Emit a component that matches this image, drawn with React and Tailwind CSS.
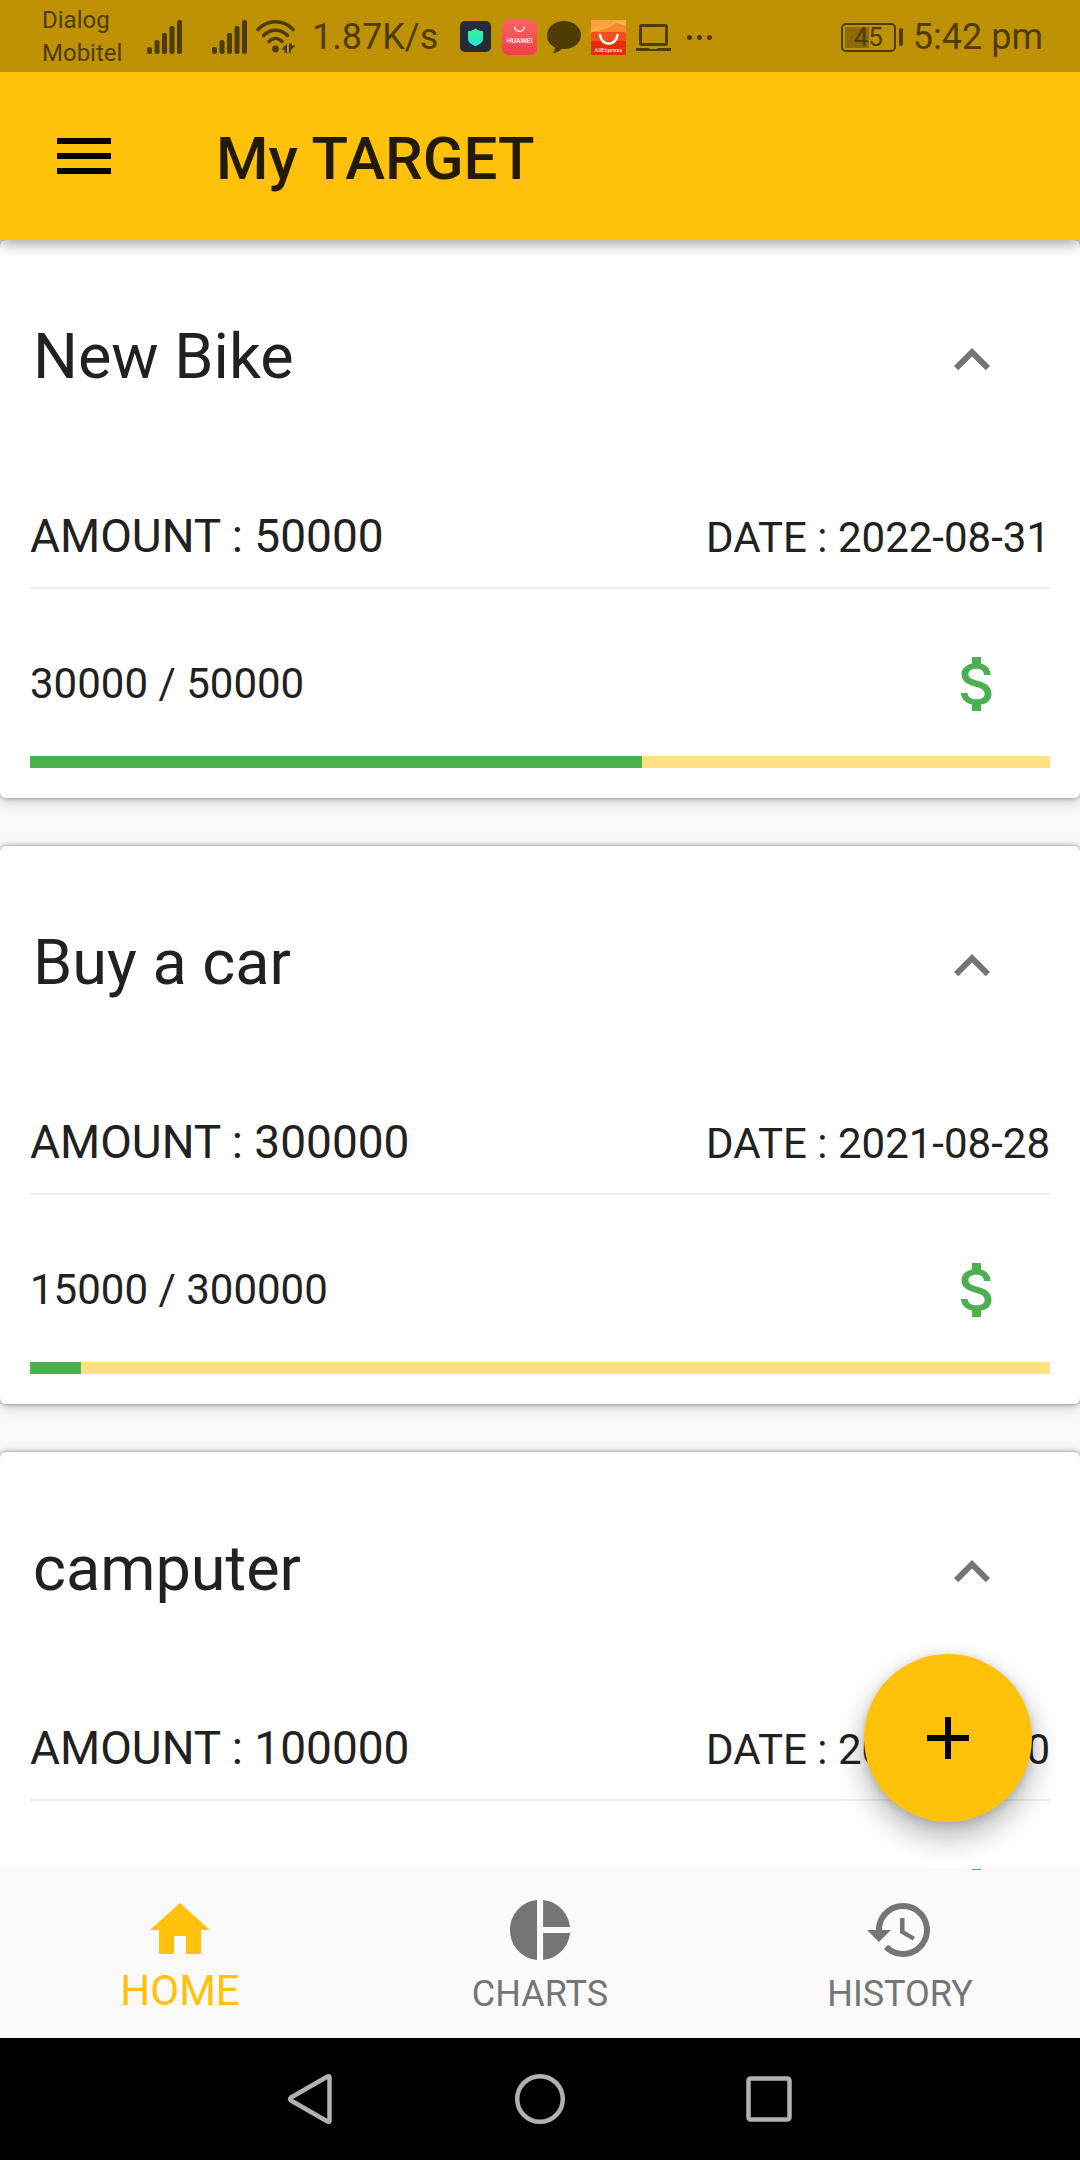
import React from "react";

const goals = [
  { title: "New Bike", saved: 30000, amount: 50000, date: "2022-08-31" },
  { title: "Buy a car", saved: 15000, amount: 300000, date: "2021-08-28" },
  { title: "camputer", saved: 20000, amount: 100000, date: "2021-10-30" },
];

function MaterialIcon({ d, className = "" }) {
  return (
    <svg viewBox="0 0 24 24" aria-hidden="true" className={`size-[72px] shrink-0 fill-current ${className}`}>
      <path d={d} />
    </svg>
  );
}

const icons = {
  menu: "M3 18h18v-2H3v2zm0-5h18v-2H3v2zm0-7v2h18V6H3z",
  expandLess: "M12 8l-6 6 1.41 1.41L12 10.83l4.59 4.58L18 14z",
  money:
    "M11.8 10.9c-2.27-.59-3-1.2-3-2.15 0-1.09 1.01-1.85 2.7-1.85 1.78 0 2.44.85 2.5 2.1h2.21c-.07-1.72-1.12-3.3-3.21-3.81V3h-3v2.16c-1.94.42-3.5 1.68-3.5 3.61 0 2.31 1.91 3.46 4.7 4.13 2.5.6 3 1.48 3 2.41 0 .69-.49 1.79-2.7 1.79-2.06 0-2.87-.92-2.98-2.1h-2.2c.12 2.19 1.76 3.42 3.68 3.83V21h3v-2.15c1.95-.37 3.5-1.5 3.5-3.55 0-2.84-2.43-3.81-4.7-4.4z",
  add: "M19 13h-6v6h-2v-6H5v-2h6V5h2v6h6v2z",
  home: "M10 20v-6h4v6h5v-8h3L12 3 2 12h3v8z",
  pie: "M11 2v20c-5.07-.5-9-4.79-9-10s3.93-9.5 9-10zm2.03 0v8.99H22c-.47-4.74-4.24-8.52-8.97-8.99zm0 11.01V22c4.74-.47 8.5-4.25 8.97-8.99h-8.97z",
  history:
    "M13 3c-4.97 0-9 4.03-9 9H1l3.89 3.89.07.14L9 12H6c0-3.87 3.13-7 7-7s7 3.13 7 7-3.13 7-7 7c-1.93 0-3.68-.79-4.94-2.06l-1.42 1.42C8.27 19.99 10.51 21 13 21c4.97 0 9-4.03 9-9s-4.03-9-9-9zm-1 5v5l4.28 2.54.72-1.21-3.5-2.08V8H12z",
};

function Signal({ className = "" }) {
  return (
    <svg viewBox="0 0 36 34" aria-hidden="true" className={`h-[34px] w-9 fill-current ${className}`}>
      <rect x="0" y="27" width="5" height="7" rx="2" />
      <rect x="7.5" y="20" width="5" height="14" rx="2" />
      <rect x="15" y="13" width="5" height="21" rx="2" />
      <rect x="22.5" y="6" width="5" height="28" rx="2" />
      <rect x="30" y="0" width="5" height="34" rx="2" />
    </svg>
  );
}

function Wifi() {
  return (
    <svg viewBox="0 0 40 34" aria-hidden="true" className="ml-2 h-[34px] w-10">
      <g fill="none" stroke="currentColor" strokeWidth="3.4" strokeLinecap="round">
        <path d="M2 9.5C12-.8 27-.8 37 9.5" />
        <path d="M7.5 15.5c7-7 17-7 24 0" />
        <path d="M13 21.5c4-4 9-4 13 0" />
      </g>
      <g fill="currentColor">
        <circle cx="19.5" cy="29" r="3.4" />
        <path d="M25 29.500l6-6V33h-2.500v-3.500zM33 23.500v9.500h2v-3l4.500-4.500h-3.500v-2z" />
      </g>
    </svg>
  );
}

function Shield() {
  return (
    <svg viewBox="0 0 32 32" aria-hidden="true" className="size-8">
      <defs>
        <linearGradient id="shield" x1="0" y1="0" x2="0" y2="1">
          <stop offset="0" stopColor="#35f58c" />
          <stop offset="1" stopColor="#27e2dc" />
        </linearGradient>
      </defs>
      <rect width="31" height="31" rx="5" fill="#252d3a" />
      <path d="M15.5 7.5c2.5 2 5 2.5 7.5 2.7v8c0 3-3.5 5-7.5 7-4-2-7.5-4-7.5-7v-8c2.5-.2 5-.7 7.5-2.7z" fill="url(#shield)" />
    </svg>
  );
}

function HuaweiStore() {
  return (
    <svg viewBox="0 0 35 35" aria-hidden="true" className="size-[35px]">
      <defs>
        <linearGradient id="huawei" x1="0" y1="0" x2="0" y2="1">
          <stop offset="0" stopColor="#fb6560" />
          <stop offset="1" stopColor="#ef3f4c" />
        </linearGradient>
      </defs>
      <rect width="35" height="35" rx="6" fill="url(#huawei)" />
      <path d="M12.5 6.5c1 6.5 9 6.5 10 0" fill="none" stroke="#fff" strokeWidth="1.3" />
      <text x="17.5" y="22.800" fontSize="7" fontWeight="500" textAnchor="middle" fill="#fff">HUAWEI</text>
    </svg>
  );
}

function Chat() {
  return (
    <svg viewBox="0 0 34 33" aria-hidden="true" className="h-[33px] w-[34px] fill-current">
      <path d="M17 0c9.4 0 17 6 17 14.2S26.4 28 17 28h-2.500C12 30.500 9 32 5.500 32c1.700-1.700 2.500-3.500 2.500-5.700C3 24 0 19.500 0 14.200 0 6 7.600 0 17 0z" />
    </svg>
  );
}

function AliExpress() {
  return (
    <svg viewBox="0 0 35 35" aria-hidden="true" className="size-[35px]">
      <rect width="35" height="35" fill="#f9a13a" />
      <path d="M0 10l8-4 6 2 8-6 13-2v14H0z" fill="#fbb04a" />
      <path d="M0 12l10-2 9-3 6-4 10 3v8H0z" fill="#f5892c" />
      <path d="M0 15q0-3 3-3h29q3 0 3 3v20H0z" fill="#e62e04" />
      <path d="M0 15q0-3 3-3h29q3 0 3 3v6H0z" fill="#f4501c" />
      <path d="M9 15c1.5 11.5 16 11.5 17.5 0" fill="none" stroke="#fff" strokeWidth="2.6" strokeLinecap="round" />
      <text x="17.5" y="31.5" fontSize="6" textAnchor="middle" fill="#fff">AliExpress</text>
    </svg>
  );
}

function Laptop() {
  return (
    <svg viewBox="0 0 35 27" aria-hidden="true" className="h-[27px] w-[35px]">
      <rect x="4.5" y="1.5" width="26" height="19" rx="1.5" fill="none" stroke="currentColor" strokeWidth="3" />
      <path d="M0 24h13l1 1h7l1-1h13v3H0z" fill="currentColor" />
    </svg>
  );
}

function Battery() {
  return (
    <div className="flex items-center gap-[3px]">
      <div className="relative flex h-[29px] w-[55px] items-center justify-center rounded-[5px] border-2 border-current">
        <div className="absolute top-[2px] bottom-[2px] left-[2px] w-[24px] bg-[#8d6b04]" />
        <span className="relative text-[26px] leading-none">45</span>
      </div>
      <div className="h-[18px] w-1 rounded-sm bg-current" />
    </div>
  );
}

function StatusBar() {
  return (
    <div className="z-20 flex h-[72px] shrink-0 items-center bg-[#bf9206] pt-0.5 pr-[37px] pl-[42px] text-[#4f3c02]">
      <div className="w-[105px] text-[24px] leading-[33px]">
        <div>Dialog</div>
        <div>Mobitel</div>
      </div>
      <Signal />
      <Signal className="ml-[29px]" />
      <Wifi />
      <span className="ml-4 text-[36px] leading-none whitespace-nowrap">1.87K/s</span>
      <div className="ml-[22px] flex items-center gap-2.5">
        <Shield />
        <HuaweiStore />
        <Chat />
        <AliExpress />
        <Laptop />
      </div>
      <div className="ml-[16px] flex gap-[5px]">
        <i className="size-[5px] rounded-full bg-current" />
        <i className="size-[5px] rounded-full bg-current" />
        <i className="size-[5px] rounded-full bg-current" />
      </div>
      <div className="ml-auto flex items-center gap-[10px]">
        <Battery />
        <span className="text-[36px] leading-none whitespace-nowrap">5:42 pm</span>
      </div>
    </div>
  );
}

function GoalCard({ title, saved, amount, date }) {
  return (
    <article className="shrink-0 rounded-[6px] bg-white px-[30px] pb-[30px] shadow-[0_0_5px_rgba(0,0,0,0.45),0_4px_16px_rgba(0,0,0,0.16)]">
      <div className="flex h-60 items-center justify-between pr-[42px] pl-[3px]">
        <h2 className="pb-1.5 text-[63px] leading-[74px]">{title}</h2>
        <button type="button" aria-label={`Collapse ${title}`} className="text-[#757575]">
          <MaterialIcon d={icons.expandLess} />
        </button>
      </div>
      <div className="flex h-[109px] items-baseline justify-between border-b-2 border-[#eeeeee] pt-7 leading-[56px]">
        <p className="text-[46px]">AMOUNT : {amount}</p>
        <p className="text-[42px]">DATE : {date}</p>
      </div>
      <div className="flex items-center justify-between pt-[59px] pr-9 pb-9">
        <p className="text-[42px] leading-[50px]">
          {saved} / {amount}
        </p>
        <button type="button" aria-label={`Add money to ${title}`} className="text-[#4caf50]">
          <MaterialIcon d={icons.money} />
        </button>
      </div>
      <div
        role="progressbar"
        aria-label={`${title} progress`}
        aria-valuenow={saved}
        aria-valuemax={amount}
        className="h-3 bg-[#ffe083]"
      >
        <div className="h-full bg-[#4caf50]" style={{ width: `${(saved / amount) * 100}%` }} />
      </div>
    </article>
  );
}

function NavItem({ icon, label, active }) {
  return (
    <a
      href={`#${label.toLowerCase()}`}
      aria-current={active ? "page" : undefined}
      className={`flex flex-1 flex-col items-center pt-6 ${active ? "text-[42px] leading-[50px] text-[#ffc109]" : "text-[36px] leading-[56px] text-[#757575]"}`}
    >
      <MaterialIcon d={icon} />
      <span>{label}</span>
    </a>
  );
}

export default function App() {
  return (
    <div className="flex h-screen flex-col overflow-hidden bg-[#fafafa] font-[Roboto,sans-serif] text-[#212121]">
      <StatusBar />
      <header className="z-10 flex h-[168px] shrink-0 items-center gap-24 bg-[#ffc109] px-12 shadow-[0_3px_14px_rgba(0,0,0,0.4)]">
        <button type="button" aria-label="Open menu" className="text-black">
          <MaterialIcon d={icons.menu} />
        </button>
        <h1 className="pt-1.5 text-[60px] leading-[70px] font-medium text-[#221b01]">My TARGET</h1>
      </header>

      <div className="relative min-h-0 flex-1">
        <main className="flex h-full flex-col gap-12 overflow-y-auto [scrollbar-width:none]">
          {goals.map((goal) => (
            <GoalCard key={goal.title} {...goal} />
          ))}
        </main>
        <button
          type="button"
          aria-label="Add target"
          className="absolute right-12 bottom-12 flex size-[168px] items-center justify-center rounded-full bg-[#ffc109] text-black shadow-[0_14px_30px_rgba(0,0,0,0.3),0_2px_10px_rgba(0,0,0,0.14)]"
        >
          <MaterialIcon d={icons.add} />
        </button>
      </div>

      <nav aria-label="Main" className="z-10 flex h-[168px] shrink-0 bg-[#fafafa] shadow-[0_0_6px_rgba(0,0,0,0.06)]">
        <NavItem icon={icons.home} label="HOME" active />
        <NavItem icon={icons.pie} label="CHARTS" />
        <NavItem icon={icons.history} label="HISTORY" />
      </nav>

      <div className="z-10 flex h-[122px] shrink-0 items-center justify-center gap-[177px] bg-black text-[#b1b1b1]">
        <button type="button" aria-label="Back">
          <svg viewBox="0 0 52 52" className="size-[52px] fill-none stroke-current" strokeWidth="4.5" strokeLinejoin="round">
            <path d="M6 24.5L42.5 3.5q2-1 2 1v43q0 2-2 1L6 27.5q-2-1.500 0-3z" />
          </svg>
        </button>
        <button type="button" aria-label="Home">
          <svg viewBox="0 0 52 52" className="size-[52px] fill-none stroke-current" strokeWidth="4.5">
            <circle cx="26" cy="26" r="22.8" />
          </svg>
        </button>
        <button type="button" aria-label="Recent apps">
          <svg viewBox="0 0 52 52" className="size-[52px] fill-none stroke-current" strokeWidth="4.5">
            <rect x="5.5" y="5.5" width="41" height="41" rx="2" />
          </svg>
        </button>
      </div>
    </div>
  );
}
